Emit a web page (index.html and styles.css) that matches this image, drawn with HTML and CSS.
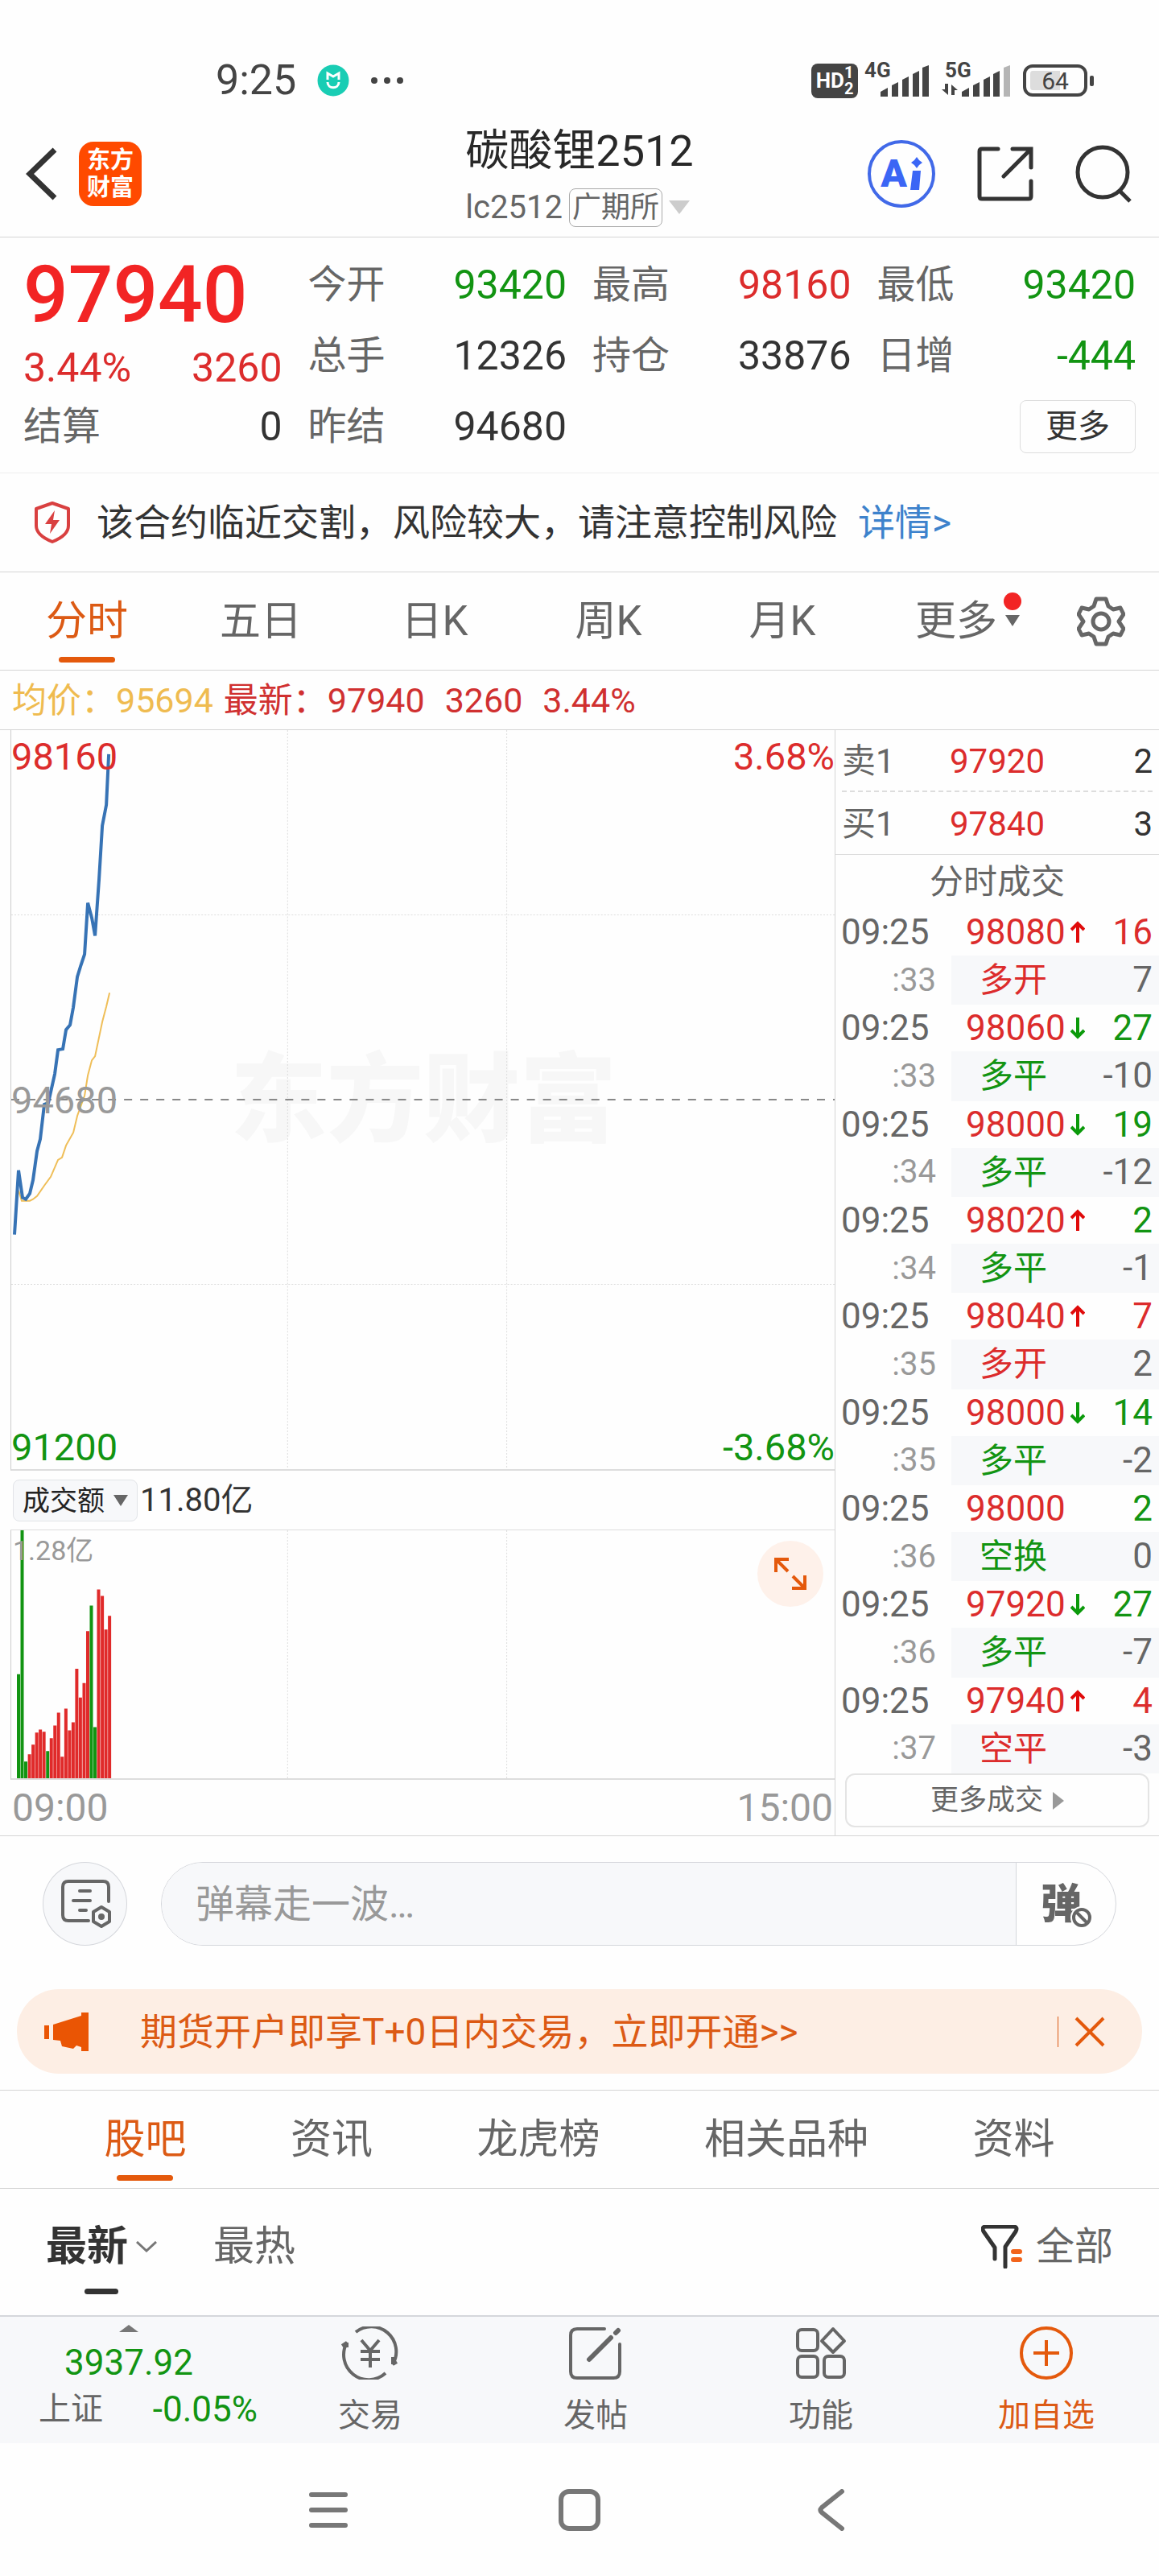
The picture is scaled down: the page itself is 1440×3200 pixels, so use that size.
FILE: index.html
```html
<!DOCTYPE html>
<html lang="zh-CN">

<head>
    <meta charset="UTF-8">
    <meta name="viewport" content="width=device-width, initial-scale=1.0">
    <title>碳酸锂2512</title>
    <link rel="stylesheet" href="styles.css">
</head>

<body>
    <div class="statusBar">
        <div class="statusLeft">
            <span class="clock">9:25</span>
            <svg width="40" height="40" viewBox="0 0 40 40">
                <circle cx="20" cy="20" r="19.5" fill="#19cdb4" />
                <path d="M13 19v-8l7 4 7-4v8M13 22c0 9 14 9 14 0" fill="none" stroke="#fff" stroke-width="3" />
            </svg>
            <svg width="42" height="10" viewBox="0 0 42 10" fill="#444">
                <circle cx="5" cy="5" r="4" />
                <circle cx="21" cy="5" r="4" />
                <circle cx="37" cy="5" r="4" />
            </svg>
        </div>
        <div class="statusRight">
            <div class="hdBadge">HD<span class="hdNums"><span>1</span><span>2</span></span></div>
            <div class="signal">
                <span class="netType">4G</span>
                <svg width="60" height="40" viewBox="0 0 60 40" fill="#444">
                    <path d="M0 40v-6l9-5v11zM14 40V26l8-4v18zM27 40V19l8-4v25zM40 40V12l8-4v32zM52 40V4l8-3v39z" />
                </svg>
            </div>
            <div class="signal">
                <span class="netType">5G</span>
                <svg width="85" height="40" viewBox="0 0 85 40" fill="#444">
                    <path d="M25 40v-6l9-5v11zM39 40V26l8-4v18zM52 40V19l8-4v25zM64 40V12l8-4v32z" />
                    <path d="M77 40V4l8-3v39z" fill="#b5b5b5" />
                    <path d="M4 24h4v14L0 31h4zM12 38V25l8 7h-4v6z" />
                </svg>
            </div>
            <div class="battery">64</div>
        </div>
    </div>

    <div class="header">
        <div class="headerLeft">
            <button class="iconButton" aria-label="返回">
                <svg width="40" height="68" viewBox="0 0 40 68">
                    <path d="M36 4L5 34l31 30" fill="none" stroke="#333" stroke-width="7" />
                </svg>
            </button>
            <div class="logo"><span>东方</span><span>财富</span></div>
        </div>
        <div class="title">
            <h1>碳酸锂2512</h1>
            <div class="subtitle">
                <span>lc2512</span>
                <span class="exchange">广期所</span>
                <svg width="26" height="17" viewBox="0 0 26 17"><path d="M0 0h26L13 17z" fill="#ccc" /></svg>
            </div>
        </div>
        <div class="headerRight">
            <button class="aiButton">
                <span>A</span>
                <svg width="16" height="42" viewBox="0 0 16 42" fill="#3b66f5">
                    <path d="M9 0l3 4 4 3-4 3-3 4-3-4-4-3 4-3zM4 17h10l-2 24H1z" />
                </svg>
            </button>
            <button class="iconButton" aria-label="分享">
                <svg width="70" height="72" viewBox="0 0 70 72" fill="none" stroke="#333" stroke-width="5" stroke-linecap="round">
                    <path d="M26 5H6q-3 0-3 3v56q0 3 3 3h58q3 0 3-3V45" />
                    <path d="M33 39L66 6M44 5h23v23" />
                </svg>
            </button>
            <button class="iconButton" aria-label="搜索">
                <svg width="70" height="72" viewBox="0 0 70 72" fill="none" stroke="#333" stroke-width="5">
                    <circle cx="34" cy="34" r="31" />
                    <path d="M55 57l13 13" />
                </svg>
            </button>
        </div>
    </div>

    <div class="stats">
        <div class="mainPrice">
            <div class="price">97940</div>
            <div class="change"><span>3.44%</span><span>3260</span></div>
        </div>
        <div class="stat"><span class="name">今开</span><span class="down">93420</span></div>
        <div class="stat"><span class="name">最高</span><span class="up">98160</span></div>
        <div class="stat"><span class="name">最低</span><span class="down">93420</span></div>
        <div class="stat"><span class="name">总手</span><span>12326</span></div>
        <div class="stat"><span class="name">持仓</span><span>33876</span></div>
        <div class="stat"><span class="name">日增</span><span class="down">-444</span></div>
        <div class="stat"><span class="name">结算</span><span>0</span></div>
        <div class="stat"><span class="name">昨结</span><span>94680</span></div>
        <button class="moreButton">更多</button>
    </div>

    <div class="warning">
        <svg width="46" height="52" viewBox="0 0 46 52">
            <path d="M23 2l20 7v21c0 10-10 16-20 20C13 46 3 40 3 30V9z" fill="none" stroke="#d94040" stroke-width="4" stroke-linejoin="round" />
            <path d="M26 11L14 28h8l-2 12 12-17h-8z" fill="#d94040" />
        </svg>
        <span>该合约临近交割，风险较大，请注意控制风险</span>
        <a href="#">详情&gt;</a>
    </div>

    <div class="periodTabs">
        <button class="tab active">分时</button>
        <button class="tab">五日</button>
        <button class="tab">日K</button>
        <button class="tab">周K</button>
        <button class="tab">月K</button>
        <button class="tab"><span class="tabMore">更多</span></button>
        <button class="gear" aria-label="设置">
            <svg width="60" height="62" viewBox="0 0 60 62" fill="none" stroke="#666" stroke-width="5" stroke-linejoin="round">
                <path d="M24 3h12l3 9 6 4 9-2 4 8-6 9 6 9-4 8-9-2-6 4-3 9H24l-3-9-6-4-9 2-4-8 6-9-6-9 4-8 9 2 6-4z" />
                <circle cx="30" cy="31" r="10" />
            </svg>
        </button>
    </div>

    <div class="info">
        <span class="avg">均价：95694</span>
        <span>最新：97940</span>
        <span class="infoGap">3260</span>
        <span class="infoGap">3.44%</span>
    </div>

    <div class="main">
        <div class="charts">
            <div class="priceChart">
                <div class="watermark">东方财富</div>
                <svg viewBox="0 0 1022 920" preserveAspectRatio="none">
                    <path class="gridLine" d="M343 0V920M615 0V920M0 230H1022M0 690H1022" />
                    <path class="midLine" d="M0 460H1022" />
                    <polyline class="avgLine" points="9,573 13,586 23,586 27,584 32,580 41,567 49,556 58,535 63,532 68,517 77,501 82,480 91,455 95,430 100,411 104,406 113,363 118,344 122,327" />
                    <polyline class="priceLine" points="4,628 9,548 14,582 18,584 23,577 27,560 32,524 36,509 41,466 46,464 50,446 54,428 58,398 64,397 68,373 73,367 77,345 82,307 86,294 91,279 95,215 100,234 104,256 109,185 113,119 118,93 121,30" />
                </svg>
                <span class="label topLeft up">98160</span>
                <span class="label topRight up">3.68%</span>
                <span class="label middle">94680</span>
                <span class="label bottomLeft down">91200</span>
                <span class="label bottomRight down">-3.68%</span>
            </div>
            <div class="volumeBar">
                <div class="volumeSelect">
                    <select aria-label="指标">
                        <option>成交额</option>
                        <option>成交量</option>
                    </select>
                    <svg width="18" height="14" viewBox="0 0 18 14"><path d="M0 0h18L9 14z" fill="#666" /></svg>
                </div>
                <span>11.80亿</span>
            </div>
            <div class="volumeChart">
                <svg viewBox="0 0 1022 310" preserveAspectRatio="none">
                    <path class="gridLine" d="M343 0V310M615 0V310" />
                    <!-- one stroke per minute -->
                    <path class="volDown" d="M9 310v-130M13.5 310v-310M18 310v-21M45.2 310v-34M99.4 310v-216M103.9 310v-64" />
                    <path class="volUp" d="M22.6 310v-30M27.1 310v-42M31.6 310v-57M36.1 310v-61M40.6 310v-58M49.7 310v-50M54.2 310v-66M58.7 310v-82M63.2 310v-27M67.8 310v-87M72.3 310v-60M76.8 310v-70M81.3 310v-137M85.8 310v-101M90.4 310v-119M94.9 310v-184M108.4 310v-236M113 310v-228M117.5 310v-186M122 310v-203" />
                </svg>
                <span class="volumeMax">1.28亿</span>
                <button class="expand" aria-label="全屏">
                    <svg width="40" height="40" viewBox="0 0 40 40" fill="none" stroke="#e4590c" stroke-width="4">
                        <path d="M18 2H2v16M2 2l15 15M22 38h16V22M38 38L23 23" />
                    </svg>
                </button>
            </div>
            <div class="times"><span>09:00</span><span>15:00</span></div>
        </div>

        <div class="orders">
            <div class="quote"><span class="name">卖1</span><span class="up">97920</span><span class="qty">2</span></div>
            <div class="quote"><span class="name">买1</span><span class="up">97840</span><span class="qty">3</span></div>
            <div class="ordersTitle">分时成交</div>
            <div class="trades">
                <div class="trade">
                    <span class="time">09:25</span>
                    <span class="deal">98080<svg class="arrow" viewBox="0 0 18 28"><path d="M9 27V3M1 11l8-8 8 8" stroke="#e00b0b" /></svg></span>
                    <span class="qty up">16</span>
                    <span class="sec">:33</span>
                    <span class="kind up">多开</span>
                    <span class="delta">7</span>
                </div>
                <div class="trade">
                    <span class="time">09:25</span>
                    <span class="deal">98060<svg class="arrow" viewBox="0 0 18 28"><path d="M9 1v24M1 17l8 8 8-8" stroke="#0b9a0b" /></svg></span>
                    <span class="qty down">27</span>
                    <span class="sec">:33</span>
                    <span class="kind down">多平</span>
                    <span class="delta">-10</span>
                </div>
                <div class="trade">
                    <span class="time">09:25</span>
                    <span class="deal">98000<svg class="arrow" viewBox="0 0 18 28"><path d="M9 1v24M1 17l8 8 8-8" stroke="#0b9a0b" /></svg></span>
                    <span class="qty down">19</span>
                    <span class="sec">:34</span>
                    <span class="kind down">多平</span>
                    <span class="delta">-12</span>
                </div>
                <div class="trade">
                    <span class="time">09:25</span>
                    <span class="deal">98020<svg class="arrow" viewBox="0 0 18 28"><path d="M9 27V3M1 11l8-8 8 8" stroke="#e00b0b" /></svg></span>
                    <span class="qty down">2</span>
                    <span class="sec">:34</span>
                    <span class="kind down">多平</span>
                    <span class="delta">-1</span>
                </div>
                <div class="trade">
                    <span class="time">09:25</span>
                    <span class="deal">98040<svg class="arrow" viewBox="0 0 18 28"><path d="M9 27V3M1 11l8-8 8 8" stroke="#e00b0b" /></svg></span>
                    <span class="qty up">7</span>
                    <span class="sec">:35</span>
                    <span class="kind up">多开</span>
                    <span class="delta">2</span>
                </div>
                <div class="trade">
                    <span class="time">09:25</span>
                    <span class="deal">98000<svg class="arrow" viewBox="0 0 18 28"><path d="M9 1v24M1 17l8 8 8-8" stroke="#0b9a0b" /></svg></span>
                    <span class="qty down">14</span>
                    <span class="sec">:35</span>
                    <span class="kind down">多平</span>
                    <span class="delta">-2</span>
                </div>
                <div class="trade">
                    <span class="time">09:25</span>
                    <span class="deal">98000</span>
                    <span class="qty down">2</span>
                    <span class="sec">:36</span>
                    <span class="kind down">空换</span>
                    <span class="delta">0</span>
                </div>
                <div class="trade">
                    <span class="time">09:25</span>
                    <span class="deal">97920<svg class="arrow" viewBox="0 0 18 28"><path d="M9 1v24M1 17l8 8 8-8" stroke="#0b9a0b" /></svg></span>
                    <span class="qty down">27</span>
                    <span class="sec">:36</span>
                    <span class="kind down">多平</span>
                    <span class="delta">-7</span>
                </div>
                <div class="trade">
                    <span class="time">09:25</span>
                    <span class="deal">97940<svg class="arrow" viewBox="0 0 18 28"><path d="M9 27V3M1 11l8-8 8 8" stroke="#e00b0b" /></svg></span>
                    <span class="qty up">4</span>
                    <span class="sec">:37</span>
                    <span class="kind up">空平</span>
                    <span class="delta">-3</span>
                </div>
            </div>
            <button class="moreTrades">更多成交<svg width="14" height="22" viewBox="0 0 14 22"><path d="M0 0l14 11L0 22z" fill="#999" /></svg></button>
        </div>
    </div>

    <div class="danmu">
        <button class="danmuSettings" aria-label="弹幕设置">
            <svg width="64" height="60" viewBox="0 0 64 60" fill="none" stroke="#666" stroke-width="4" stroke-linecap="round" stroke-linejoin="round">
                <path d="M34 51H9q-7 0-7-7V9q0-7 7-7h43q7 0 7 7v18" />
                <path d="M23 14h13M15 26h21M23 38h8" />
                <path d="M50 34l10 6v12l-10 6-10-6V40z" />
                <circle cx="50" cy="46" r="2" />
            </svg>
        </button>
        <div class="danmuBox">
            <input type="text" placeholder="弹幕走一波…" aria-label="弹幕">
            <button class="danmuToggle">弹
                <svg width="28" height="28" viewBox="0 0 28 28">
                    <circle cx="14" cy="14" r="14" fill="#fff" />
                    <circle cx="14" cy="14" r="10" fill="none" stroke="#666" stroke-width="4" />
                    <path d="M7 7l14 14" stroke="#666" stroke-width="4" />
                </svg>
            </button>
        </div>
    </div>

    <div class="banner">
        <svg width="56" height="48" viewBox="0 0 56 48" fill="#ea5504">
            <path d="M0 16h6v17H0zM11 15L46 4V0h9v48h-9v-5l-6-2-4 4-14-3-2-7-9-1z" />
        </svg>
        <a href="#">期货开户即享T+0日内交易，立即开通&gt;&gt;</a>
        <button class="close" aria-label="关闭">
            <svg width="38" height="38" viewBox="0 0 38 38"><path d="M2 2l34 34M36 2L2 36" stroke="#e4590c" stroke-width="4" /></svg>
        </button>
    </div>

    <div class="sectionTabs">
        <button class="tab active">股吧</button>
        <button class="tab">资讯</button>
        <button class="tab">龙虎榜</button>
        <button class="tab">相关品种</button>
        <button class="tab">资料</button>
    </div>

    <div class="filter">
        <button class="sort active">最新
            <svg width="26" height="14" viewBox="0 0 26 14"><path d="M1 1l12 11L25 1" fill="none" stroke="#777" stroke-width="3" /></svg>
        </button>
        <button class="sort">最热</button>
        <button class="all">
            <svg width="52" height="54" viewBox="0 0 52 54" fill="none" stroke-linecap="round" stroke-linejoin="round">
                <path d="M17 42V28L3 8q-3-6 3-6h34q6 0 3 6L30 27v25" stroke="#333" stroke-width="5" />
                <path d="M40 33h8M40 43h8" stroke="#f2641c" stroke-width="6" />
            </svg>
            全部
        </button>
    </div>

    <div class="bottomBar">
        <button class="index">
            <svg width="24" height="9" viewBox="0 0 24 9"><path d="M12 0l12 9H0z" fill="#777" /></svg>
            <span class="indexValue">3937.92</span>
            <span class="indexRow"><span class="indexName">上证</span><span>-0.05%</span></span>
        </button>
        <button class="action">
            <svg width="76" height="66" viewBox="0 0 76 66" fill="none" stroke="#666" stroke-width="4">
                <path d="M20 7A31 31 0 0 1 66 47l5-3M66 47v-9M57 58A31 31 0 0 1 9 20l-6 4M9 20v6" />
                <path d="M27 17l11 13 11-13M38 30v21M26 31h24M26 41h24" />
            </svg>
            交易
        </button>
        <button class="action">
            <svg width="66" height="66" viewBox="0 0 66 66" fill="none" stroke="#666" stroke-width="4" stroke-linecap="round">
                <path d="M44 3H10q-8 0-8 8v45q0 8 8 8h45q8 0 8-8V22" />
                <path d="M25 41L52 14M58 8l3-3" stroke-width="6" />
            </svg>
            发帖
        </button>
        <button class="action">
            <svg width="64" height="66" viewBox="0 0 64 66" fill="none" stroke="#666" stroke-width="4" stroke-linejoin="round">
                <rect x="3" y="4" width="25" height="26" rx="5" />
                <rect x="3" y="37" width="25" height="26" rx="5" />
                <rect x="36" y="37" width="25" height="26" rx="5" />
                <path d="M47 3l14 15-14 14-14-14z" />
            </svg>
            功能
        </button>
        <button class="action add">
            <svg width="66" height="66" viewBox="0 0 66 66" fill="none" stroke="#e4590c" stroke-width="4">
                <circle cx="33" cy="33" r="31" />
                <path d="M17 33h32M33 17v32" />
            </svg>
            加自选
        </button>
    </div>

    <div class="systemNav">
        <button aria-label="菜单">
            <svg width="52" height="52" viewBox="0 0 52 52"><path d="M5 7h42M5 26h42M5 45h42" stroke="#777" stroke-width="6" stroke-linecap="round" /></svg>
        </button>
        <button aria-label="主页">
            <svg width="52" height="52" viewBox="0 0 52 52"><rect x="3" y="3" width="46" height="46" rx="10" fill="none" stroke="#777" stroke-width="6" /></svg>
        </button>
        <button aria-label="后退">
            <svg width="52" height="52" viewBox="0 0 52 52"><path d="M40 3L15 23q-3 3 0 6l25 20" fill="none" stroke="#777" stroke-width="6" stroke-linecap="round" /></svg>
        </button>
    </div>
</body>

</html>
```
FILE: styles.css
```css
* {
    box-sizing: border-box;
}

body {
    margin: 0;
    background-color: #fefefe;
    color: #333;
    font-family: Roboto, "Noto Sans CJK SC", sans-serif;
    font-size: 48px;
    line-height: 1;
}

button {
    padding: 0;
    border: none;
    background: none;
    color: inherit;
    font: inherit;
}

a {
    text-decoration: none;
}

svg {
    display: block;
    flex: none;
}

.up {
    color: #dc2c2c;
}

.down {
    color: #129412;
}

.name {
    color: #666;
}

/* phone status bar */
.statusBar {
    display: flex;
    justify-content: space-between;
    align-items: center;
    height: 140px;
    padding: 60px 89px 0 268px;
    color: #444;
}

.statusLeft {
    display: flex;
    align-items: center;
    gap: 26px;
    font-size: 52px;
}

.statusRight {
    display: flex;
    align-items: center;
    gap: 16px;
}

.hdBadge {
    display: flex;
    justify-content: center;
    align-items: center;
    width: 58px;
    height: 43px;
    border-radius: 8px;
    background-color: #444;
    color: #fff;
    font-size: 26px;
    font-weight: bold;
}

.hdNums {
    display: flex;
    flex-direction: column;
    font-size: 20px;
}

.signal {
    position: relative;
    padding-left: 12px;
}

.signal + .signal {
    padding-left: 0;
}

.netType {
    position: absolute;
    left: -8px;
    top: -6px;
    font-size: 26px;
    font-weight: bold;
}

.signal + .signal .netType {
    left: 4px;
}

.battery {
    position: relative;
    width: 80px;
    height: 40px;
    border: 4px solid #444;
    border-radius: 12px;
    background: linear-gradient(90deg, #ddd 60%, #fefefe 60%) content-box;
    padding: 4px 5px;
    font-size: 30px;
    line-height: 26px;
    text-align: center;
}

.battery::after {
    content: "";
    position: absolute;
    right: -12px;
    top: 10px;
    width: 5px;
    height: 13px;
    border-radius: 2px;
    background-color: #444;
}

/* title bar */
.header {
    display: grid;
    grid-template-columns: 1fr auto 1fr;
    align-items: center;
    height: 155px;
    padding: 0 34px 2px 32px;
    border-bottom: 1px solid #d5d5d5;
}

.headerLeft {
    display: flex;
    align-items: center;
    gap: 26px;
}

.logo {
    display: flex;
    flex-direction: column;
    justify-content: center;
    align-items: center;
    width: 78px;
    height: 80px;
    border-radius: 18px;
    background-color: #ff4a00;
    color: #fff;
    font-size: 29px;
    font-weight: bold;
    line-height: 34px;
}

.title {
    padding: 7px 0 0 2px;
}

.title h1 {
    margin: 0;
    color: #282828;
    font-size: 54px;
    font-weight: normal;
    line-height: 76px;
}

.subtitle {
    display: flex;
    align-items: center;
    gap: 8px;
    height: 64px;
    color: #666;
    font-size: 40px;
}

.exchange {
    padding: 4px 3px;
    border: 1px solid #aaa;
    border-radius: 8px;
    font-size: 36px;
    line-height: 38px;
}

.headerRight {
    display: flex;
    justify-content: flex-end;
    align-items: center;
    gap: 52px;
}

.aiButton {
    display: flex;
    justify-content: center;
    align-items: center;
    gap: 3px;
    width: 84px;
    height: 84px;
    border: 4px solid #4169e8;
    border-radius: 50%;
    color: #3b66f5;
    font-size: 48px;
    font-weight: 900;
}

/* quote figures */
.stats {
    display: grid;
    grid-template-columns: repeat(4, 1fr);
    grid-auto-rows: 88px;
    column-gap: 32px;
    padding: 15px 29px 13px;
    border-bottom: 1px solid #eee;
}

.mainPrice {
    grid-row: span 2;
}

.price {
    color: #f22424;
    font-size: 98px;
    font-weight: 500;
    line-height: 114px;
}

.change {
    display: flex;
    justify-content: space-between;
    color: #dc2c2c;
    font-size: 50px;
    line-height: 66px;
}

.stat {
    display: flex;
    justify-content: space-between;
    align-items: center;
    font-size: 50px;
}

.stat .name {
    font-size: 48px;
}

.moreButton {
    grid-column: 4;
    justify-self: end;
    align-self: center;
    width: 144px;
    height: 66px;
    border: 1px solid #ddd;
    border-radius: 8px;
    font-size: 40px;
}

.warning {
    display: flex;
    align-items: center;
    height: 123px;
    padding: 0 42px;
    border-bottom: 1px solid #d5d5d5;
    font-size: 46px;
}

.warning span {
    margin: 0 26px 0 32px;
}

.warning a {
    color: #3d82cc;
}

/* tabs */
.periodTabs {
    display: grid;
    grid-template-columns: repeat(6, 3fr) 2fr;
    height: 122px;
    border-bottom: 1px solid #d5d5d5;
}

.tab {
    position: relative;
    color: #666;
    font-size: 51px;
}

.tab.active {
    color: #dc5a14;
}

.tab.active::after {
    content: "";
    position: absolute;
    left: 50%;
    bottom: 9px;
    width: 70px;
    height: 7px;
    margin-left: -35px;
    border-radius: 4px;
    background-color: #e4590c;
}

.tabMore {
    position: relative;
}

.tabMore::before {
    content: "";
    position: absolute;
    right: -30px;
    top: -6px;
    width: 22px;
    height: 22px;
    border-radius: 50%;
    background-color: #f22424;
}

.tabMore::after {
    content: "";
    position: absolute;
    right: -28px;
    top: 22px;
    border: 9px solid transparent;
    border-top: 14px solid #666;
    border-bottom: none;
}

.gear {
    display: flex;
    justify-content: center;
    align-items: center;
}

.info {
    display: flex;
    align-items: center;
    gap: 13px;
    height: 74px;
    padding: 2px 0 0 15px;
    border-bottom: 1px solid #d5d5d5;
    color: #d03030;
    font-size: 43px;
}

.info .avg {
    color: #efbb50;
}

.infoGap {
    margin-left: 12px;
}

/* chart and order list */
.main {
    display: flex;
    border-bottom: 1px solid #d5d5d5;
}

.charts {
    flex: 1;
    padding-left: 13px;
}

.priceChart,
.volumeChart {
    position: relative;
    border-left: 1px solid #ccc;
    border-bottom: 2px solid #ddd;
}

.priceChart {
    height: 920px;
}

.priceChart svg,
.volumeChart > svg {
    position: absolute;
    width: 100%;
    height: 100%;
}

.gridLine {
    stroke: #ddd;
    stroke-dasharray: 2 2;
}

.midLine {
    stroke: #888;
    stroke-width: 2;
    stroke-dasharray: 10 10;
}

.priceLine,
.avgLine {
    fill: none;
    stroke: #3773b5;
    stroke-width: 4;
}

.avgLine {
    stroke: #efbe58;
    stroke-width: 2;
}

.volUp,
.volDown {
    stroke: #e02a2a;
    stroke-width: 4;
}

.volDown {
    stroke: #129412;
}

.watermark {
    position: absolute;
    left: 272px;
    right: 0;
    top: 50%;
    margin-top: -58px;
    color: #f7f7f7;
    font-size: 120px;
    font-weight: 900;
}

.label {
    position: absolute;
    font-size: 47px;
}

.topLeft {
    left: 0;
    top: 9px;
}

.topRight {
    right: 0;
    top: 9px;
}

.middle {
    left: 0;
    top: 50%;
    margin-top: -23px;
    color: #999;
}

.bottomLeft {
    left: 0;
    bottom: 4px;
}

.bottomRight {
    right: 0;
    bottom: 4px;
}

.volumeBar {
    display: flex;
    align-items: center;
    gap: 3px;
    height: 74px;
    padding-left: 3px;
    border-bottom: 1px solid #ddd;
    font-size: 40px;
}

.volumeSelect {
    position: relative;
}

.volumeSelect select {
    appearance: none;
    width: 155px;
    height: 52px;
    padding: 0 0 0 11px;
    border: 1px solid #e2e4e8;
    border-radius: 8px;
    background-color: #f7f8fa;
    color: #222;
    font-family: inherit;
    font-size: 34px;
}

.volumeSelect svg {
    position: absolute;
    right: 12px;
    top: 19px;
    pointer-events: none;
}

.volumeChart {
    height: 310px;
}

.volumeMax {
    position: absolute;
    left: 2px;
    top: 8px;
    color: #999;
    font-size: 34px;
}

.expand {
    position: absolute;
    right: 14px;
    top: 13px;
    display: flex;
    justify-content: center;
    align-items: center;
    width: 82px;
    height: 82px;
    border-radius: 50%;
    background-color: #fef1ea;
}

.times {
    display: flex;
    justify-content: space-between;
    padding: 0 2px;
    color: #999;
    line-height: 69px;
}

.orders {
    display: flex;
    flex-direction: column;
    flex: none;
    width: 403px;
    border-left: 1px solid #d5d5d5;
}

.quote {
    display: grid;
    grid-template-columns: 134px 1fr auto;
    align-items: center;
    height: 77px;
    margin: 0 8px;
    padding-top: 3px;
    font-size: 42px;
}

.quote:first-child {
    border-bottom: 2px dashed #ddd;
}

.ordersTitle {
    border-top: 1px solid #ddd;
    color: #666;
    font-size: 42px;
    line-height: 67px;
    text-align: center;
}

.trades {
    display: flex;
    flex-direction: column;
    flex: 1;
}

.trade {
    display: grid;
    grid-template-columns: 144px 1fr auto;
    grid-template-rows: 58px 1fr;
    align-items: center;
    flex: 1;
    font-size: 44px;
}

.time {
    padding-left: 7px;
    color: #666;
}

.deal {
    display: flex;
    align-items: center;
    gap: 6px;
    padding-left: 18px;
    color: #dc2c2c;
}

.arrow {
    width: 18px;
    height: 28px;
    fill: none;
    stroke-width: 4;
}

.trade .qty,
.delta {
    padding-right: 8px;
    text-align: right;
}

.sec {
    padding-right: 19px;
    color: #999;
    font-size: 40px;
    text-align: right;
}

.kind,
.delta {
    align-self: stretch;
    background-color: #f7f8fa;
    line-height: 61px;
}

.kind {
    padding-left: 35px;
    font-size: 42px;
}

.delta {
    color: #666;
}

.moreTrades {
    display: flex;
    justify-content: center;
    align-items: center;
    gap: 12px;
    height: 67px;
    margin: 0 12px 10px;
    border: 2px solid #e4e4e4;
    border-radius: 12px;
    color: #666;
    font-size: 35px;
}

/* comment box and banner */
.danmu {
    display: flex;
    gap: 42px;
    padding: 32px 53px 54px;
}

.danmuSettings {
    display: flex;
    justify-content: center;
    align-items: center;
    width: 105px;
    height: 104px;
    padding-left: 4px;
    border: 1px solid #d5d7dc;
    border-radius: 50%;
    background-color: #f7f8fa;
}

.danmuBox {
    display: flex;
    flex: 1;
    overflow: hidden;
    border: 1px solid #d5d7dc;
    border-radius: 52px;
}

.danmuBox input {
    flex: 1;
    min-width: 0;
    padding: 0 42px;
    border: none;
    background-color: #f7f8fa;
    font: inherit;
}

.danmuBox input::placeholder {
    color: #999;
}

.danmuToggle {
    position: relative;
    width: 124px;
    padding-right: 12px;
    border-left: 1px solid #d5d7dc;
    color: #666;
    font-size: 51px;
    font-weight: 900;
}

.danmuToggle svg {
    position: absolute;
    right: 28px;
    bottom: 20px;
}

.banner {
    display: flex;
    align-items: center;
    height: 105px;
    margin: 0 21px 20px;
    padding: 0 46px 0 34px;
    border-radius: 52px;
    background-color: #fdeee4;
    font-size: 46px;
}

.banner a {
    flex: 1;
    margin-left: 63px;
    color: #dc5a14;
}

.close {
    padding-left: 20px;
    border-left: 1px solid #dc5a14;
}

.sectionTabs {
    display: flex;
    justify-content: space-evenly;
    height: 123px;
    border-top: 1px solid #d5d5d5;
    border-bottom: 1px solid #d5d5d5;
}

.filter {
    display: flex;
    align-items: center;
    gap: 70px;
    height: 157px;
    padding: 0 57px 14px;
    color: #666;
}

.sort {
    position: relative;
    display: flex;
    align-items: center;
    gap: 10px;
    font-size: 51px;
}

.sort.active {
    color: #333;
    font-weight: bold;
}

.sort.active::after {
    content: "";
    position: absolute;
    left: 50%;
    bottom: -34px;
    width: 42px;
    height: 7px;
    margin-left: -21px;
    border-radius: 4px;
    background-color: #333;
}

.all {
    display: flex;
    align-items: center;
    gap: 16px;
    margin-left: auto;
}

/* bottom bars */
.bottomBar {
    display: grid;
    grid-template-columns: 8fr repeat(4, 7fr);
    height: 159px;
    border-top: 2px solid #d5d7dc;
    background-color: #f7f8fa;
}

.index {
    display: flex;
    flex-direction: column;
    align-items: center;
    padding-top: 10px;
    color: #129412;
    font-size: 44px;
}

.indexValue {
    margin-top: 9px;
    line-height: 58px;
}

.indexRow {
    display: flex;
    justify-content: space-between;
    align-self: stretch;
    padding-left: 48px;
    line-height: 58px;
}

.indexName {
    color: #666;
    font-size: 40px;
}

.action {
    display: flex;
    flex-direction: column;
    align-items: center;
    gap: 25px;
    padding-top: 12px;
    color: #666;
    font-size: 40px;
}

.add {
    color: #dc5a14;
}

.systemNav {
    display: flex;
    justify-content: center;
    align-items: center;
    gap: 260px;
    height: 165px;
}
```
